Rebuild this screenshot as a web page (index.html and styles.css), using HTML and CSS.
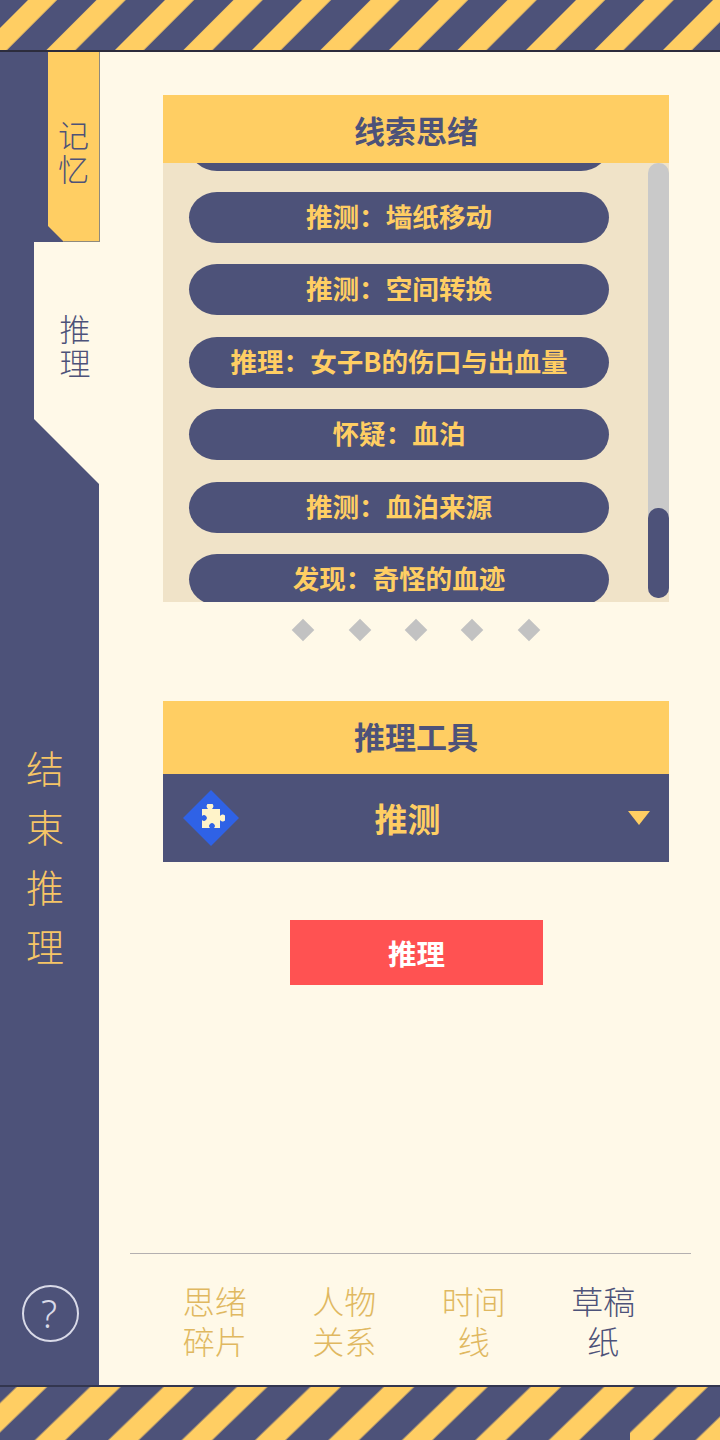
FILE: index.html
```html
<!DOCTYPE html>
<html lang="zh-CN">
<head>
    <meta charset="UTF-8">
    <meta name="viewport" content="width=device-width, initial-scale=1.0">
    <title>推理</title>
    <link rel="stylesheet" href="styles.css">
</head>
<body>
    <div class="screen">
        <div class="hazard hazard-top">
            <svg width="720" height="50">
                <defs>
                    <pattern id="stripesTop" patternUnits="userSpaceOnUse" width="48.44" height="20" patternTransform="rotate(45)">
                        <rect class="stripe" x="19.8" y="0" width="20.5" height="20"></rect>
                    </pattern>
                </defs>
                <rect width="720" height="50" fill="url(#stripesTop)"></rect>
            </svg>
        </div>
        <div class="middle">
            <aside class="sidebar">
                <div class="tab tab-memory">记<br>忆</div>
                <div class="tab tab-reason">推<br>理</div>
                <div class="end-reason">结<br>束<br>推<br>理</div>
                <div class="help">?</div>
            </aside>
            <main class="content">
                <section class="panel">
                    <h2 class="panel-title">线索思绪</h2>
                    <div class="clue-box">
                        <div class="clue-list">
                            <div class="clue"></div>
                            <div class="clue">推测：墙纸移动</div>
                            <div class="clue">推测：空间转换</div>
                            <div class="clue">推理：女子B的伤口与出血量</div>
                            <div class="clue">怀疑：血泊</div>
                            <div class="clue">推测：血泊来源</div>
                            <div class="clue">发现：奇怪的血迹</div>
                        </div>
                        <div class="scroll-track"><div class="scroll-thumb"></div></div>
                    </div>
                </section>
                <div class="dots">
                    <span class="dot"></span>
                    <span class="dot"></span>
                    <span class="dot"></span>
                    <span class="dot"></span>
                    <span class="dot"></span>
                </div>
                <section class="panel tools">
                    <h2 class="panel-title tools-title">推理工具</h2>
                    <div class="tool-select">
                        <span class="tool-icon">
                            <svg viewBox="-3 2 28 28" width="28" height="28">
                                <path fill="#fff3c9" d="M2 7H8A3.400 3.400 0 1 1 12 7H20V14A3.400 3.400 0 1 1 20 18V26H14A2.800 2.800 0 1 0 10 26H2V18A2.800 2.800 0 1 0 2 14Z"/>
                            </svg>
                        </span>
                        <span class="tool-name">推测</span>
                        <span class="tool-arrow"></span>
                    </div>
                </section>
                <button type="button" class="reason-btn">推理</button>
                <nav class="bottom-nav">
                    <div class="nav-item">思绪<br>碎片</div>
                    <div class="nav-item">人物<br>关系</div>
                    <div class="nav-item">时间<br>线</div>
                    <div class="nav-item active">草稿<br>纸</div>
                </nav>
            </main>
        </div>
        <div class="hazard hazard-bottom">
            <svg width="720" height="53">
                <defs>
                    <pattern id="stripesBottom" patternUnits="userSpaceOnUse" width="51" height="20" patternTransform="rotate(46)">
                        <rect class="stripe" x="11.5" y="0" width="21.1" height="20"></rect>
                    </pattern>
                </defs>
                <rect width="720" height="53" fill="url(#stripesBottom)"></rect>
                <rect class="seam" x="616" y="39" width="14" height="14"></rect>
            </svg>
        </div>
    </div>
</body>
</html>
```
FILE: styles.css
```css
:root {
    --navy: #4d5279;
    --yellow: #ffce63;
    --cream: #fff9e8;
    --beige: #f0e3c8;
    --gray: #c9c9c9;
}
* {
    box-sizing: border-box;
}
html, body {
    margin: 0;
    padding: 0;
}
body {
    font-family: "Noto Sans CJK SC", "Noto Sans", sans-serif;
    color: var(--navy);
    background-color: var(--cream);
}
.screen {
    width: 720px;
    height: 1440px;
    display: flex;
    flex-direction: column;
    overflow: hidden;
}
.hazard {
    flex: none;
    background-color: var(--navy);
}
.hazard svg {
    display: block;
}
.stripe {
    fill: var(--yellow);
}
.seam {
    fill: var(--navy);
}
.hazard-top {
    height: 52px;
    border-bottom: 2px solid #2c2c3c;
}
.hazard-bottom {
    height: 55px;
    border-top: 2px solid #33364f;
}
.middle {
    flex: 1;
    display: flex;
    min-height: 0;
}
.sidebar {
    width: 99px;
    flex: none;
    background-color: var(--navy);
    display: flex;
    flex-direction: column;
}
.tab {
    font-size: 31px;
    font-weight: 300;
    line-height: 34px;
    text-align: center;
}
.tab-memory {
    margin-left: 48px;
    width: 52px;
    height: 190px;
    padding-top: 65px;
    background-color: var(--yellow);
    border-right: 1px solid #8f8a7d;
    border-bottom: 1px solid #8f8a7d;
    clip-path: polygon(0 0, 100% 0, 100% 100%, 16px 100%, 0 174px);
}
.tab-reason {
    margin-left: 34px;
    width: 68px;
    height: 245px;
    padding-top: 69px;
    padding-left: 14px;
    background-color: var(--cream);
    clip-path: polygon(0 0, 100% 0, 100% 100%, 0 177px);
}
.end-reason {
    margin-top: 250px;
    padding-right: 9px;
    font-size: 38px;
    font-weight: 300;
    line-height: 59.300px;
    text-align: center;
    color: #f6c566;
}
.help {
    width: 57px;
    height: 57px;
    margin-top: 311px;
    margin-left: 22px;
    padding-right: 3px;
    border: 2px solid #d9dae8;
    border-radius: 50%;
    color: #d9dae8;
    font-family: "Noto Sans", sans-serif;
    font-size: 38px;
    font-weight: 300;
    line-height: 52px;
    text-align: center;
}
.content {
    flex: 1;
    padding-top: 43px;
    display: flex;
    flex-direction: column;
    align-items: flex-start;
}
.panel {
    width: 506px;
    margin-left: 64px;
}
.panel-title {
    margin: 0;
    height: 68px;
    background-color: var(--yellow);
    font-size: 31px;
    font-weight: 700;
    line-height: 70px;
    text-align: center;
    color: var(--navy);
}
.clue-box {
    height: 439px;
    background-color: var(--beige);
    padding-left: 26px;
    display: flex;
    overflow: hidden;
}
.clue-list {
    width: 420px;
    margin-top: -43.400px;
    flex: none;
}
.clue {
    height: 51px;
    margin-bottom: 21.400px;
    background-color: var(--navy);
    border-radius: 28px / 25.500px;
    color: var(--yellow);
    font-size: 26.600px;
    font-weight: 700;
    line-height: 48px;
    text-align: center;
}
.scroll-track {
    width: 21px;
    height: 435px;
    margin-left: 39px;
    background-color: var(--gray);
    border-radius: 10px;
    display: flex;
    align-items: flex-end;
}
.scroll-thumb {
    width: 21px;
    height: 90px;
    background-color: var(--navy);
    border-radius: 10px;
}
.dots {
    width: 506px;
    margin-left: 64px;
    height: 56px;
    display: flex;
    justify-content: center;
    align-items: center;
    gap: 40.300px;
}
.dot {
    width: 16px;
    height: 16px;
    background-color: #c2c2c2;
    transform: rotate(45deg);
}
.tools {
    margin-top: 43px;
}
.tools-title {
    height: 73px;
    line-height: 70px;
}
.tool-select {
    height: 88px;
    background-color: var(--navy);
    position: relative;
    text-align: center;
    padding-right: 17px;
}
.tool-icon {
    position: absolute;
    left: 20px;
    top: 16px;
    width: 56px;
    height: 56px;
    background-color: #2f62e6;
    clip-path: polygon(50% 0, 100% 50%, 50% 100%, 0 50%);
    display: flex;
    align-items: center;
    justify-content: center;
}
.tool-name {
    color: var(--yellow);
    font-size: 33px;
    font-weight: 700;
    line-height: 88px;
}
.tool-arrow {
    position: absolute;
    right: 19px;
    top: 37px;
    width: 0;
    height: 0;
    border-left: 11px solid transparent;
    border-right: 11px solid transparent;
    border-top: 14px solid var(--yellow);
}
.reason-btn {
    display: block;
    width: 253px;
    height: 65px;
    margin-top: 58px;
    margin-left: 191px;
    padding: 0;
    border: none;
    background-color: #ff5252;
    color: #fff;
    font-family: inherit;
    font-size: 28.500px;
    font-weight: 700;
}
.bottom-nav {
    width: 561px;
    height: 132px;
    margin-top: auto;
    margin-left: 31px;
    border-top: 1px solid #b4b0b0;
    padding: 26px 0 0 20px;
    display: flex;
}
.nav-item {
    width: 129.500px;
    font-size: 32px;
    font-weight: 300;
    line-height: 40px;
    text-align: center;
    color: #e0b860;
}
.nav-item.active {
    color: var(--navy);
}
```
